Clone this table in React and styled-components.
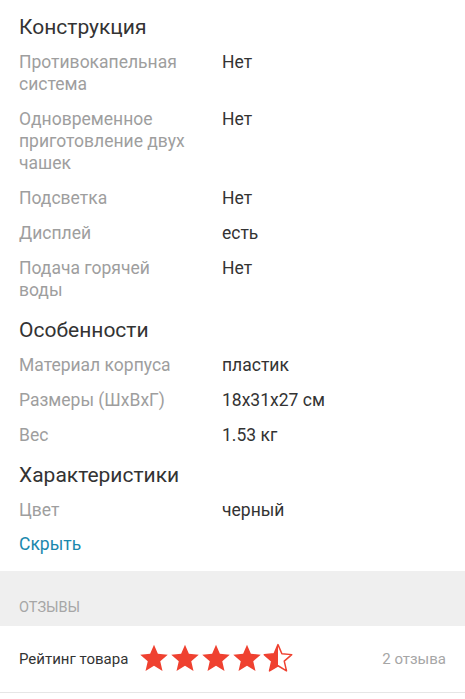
import React from 'react';
import styled, { createGlobalStyle } from 'styled-components';

const GlobalStyle = createGlobalStyle`
  html, body {
    margin: 0;
    padding: 0;
    background: #ffffff;
    font-family: Roboto, "Noto Sans", "Liberation Sans", sans-serif;
    -webkit-font-smoothing: antialiased;
  }
`;

const Page = styled.div`
  width: 465px;
  background: #ffffff;
`;

const Specs = styled.div`
  padding: 13px 19px 16px;
`;

const SectionTitle = styled.div`
  font-size: 21px;
  line-height: 28px;
  color: #333333;
  padding-top: ${(p) => (p.first ? '0' : '8px')};
  margin-bottom: 4px;
`;

const Row = styled.div`
  display: grid;
  grid-template-columns: 176px 1fr;
  column-gap: 27px;
  padding: 6px 0 7px;
  font-size: 17.5px;
  line-height: 22px;
`;

const Label = styled.div`
  color: #9e9e9e;
`;

const Value = styled.div`
  color: #333333;
`;

const HideLink = styled.a`
  display: block;
  margin-top: 5px;
  font-size: 17.5px;
  line-height: 22px;
  color: #1b88ad;
  text-decoration: none;
  cursor: pointer;
`;

const Band = styled.div`
  background: #efefef;
  height: 55px;
  padding: 0 19px 10px;
  display: flex;
  align-items: flex-end;
  box-sizing: border-box;
`;

const BandTitle = styled.div`
  font-size: 14.5px;
  line-height: 16px;
  color: #a6a6a6;
  text-transform: uppercase;
`;

const RatingRow = styled.div`
  display: flex;
  align-items: center;
  height: 66px;
  padding: 0 19px;
  border-bottom: 1px solid #e6e6e6;
`;

const RatingLabel = styled.div`
  font-size: 15px;
  color: #333333;
  margin-right: 11px;
`;

const Stars = styled.div`
  display: flex;
  gap: 1px;
  margin-top: -3px;
`;

const Count = styled.div`
  margin-left: auto;
  font-size: 15px;
  color: #a6a6a6;
`;

const STAR = '12,1.3 15.1,8.6 23,9.3 17,14.5 18.8,22.3 12,18.2 5.2,22.3 7,14.5 1,9.3 8.9,8.6';

const Star = ({ half, id }) => (
  <svg width="30" height="30" viewBox="0 0 24 24">
    {half && (
      <defs>
        <clipPath id={id}>
          <rect x="0" y="0" width="12" height="24" />
        </clipPath>
      </defs>
    )}
    {half ? (
      <>
        <polygon points={STAR} fill="#ffffff" stroke="#ef4130" strokeWidth="1.2" strokeLinejoin="round" />
        <polygon points={STAR} fill="#ef4130" clipPath={`url(#${id})`} />
      </>
    ) : (
      <polygon points={STAR} fill="#ef4130" />
    )}
  </svg>
);

const sections = [
  {
    title: 'Конструкция',
    rows: [
      ['Противокапельная система', 'Нет'],
      ['Одновременное приготовление двух чашек', 'Нет'],
      ['Подсветка', 'Нет'],
      ['Дисплей', 'есть'],
      ['Подача горячей воды', 'Нет'],
    ],
  },
  {
    title: 'Особенности',
    rows: [
      ['Материал корпуса', 'пластик'],
      ['Размеры (ШхВхГ)', '18x31x27 см'],
      ['Вес', '1.53 кг'],
    ],
  },
  {
    title: 'Характеристики',
    rows: [['Цвет', 'черный']],
  },
];

export default function App() {
  return (
    <Page>
      <GlobalStyle />
      <Specs>
        {sections.map((s, i) => (
          <div key={s.title}>
            <SectionTitle first={i === 0}>{s.title}</SectionTitle>
            {s.rows.map(([label, value]) => (
              <Row key={label}>
                <Label>{label}</Label>
                <Value>{value}</Value>
              </Row>
            ))}
          </div>
        ))}
        <HideLink>Скрыть</HideLink>
      </Specs>
      <Band>
        <BandTitle>Отзывы</BandTitle>
      </Band>
      <RatingRow>
        <RatingLabel>Рейтинг товара</RatingLabel>
        <Stars>
          <Star />
          <Star />
          <Star />
          <Star />
          <Star half id="half-star" />
        </Stars>
        <Count>2 отзыва</Count>
      </RatingRow>
    </Page>
  );
}
